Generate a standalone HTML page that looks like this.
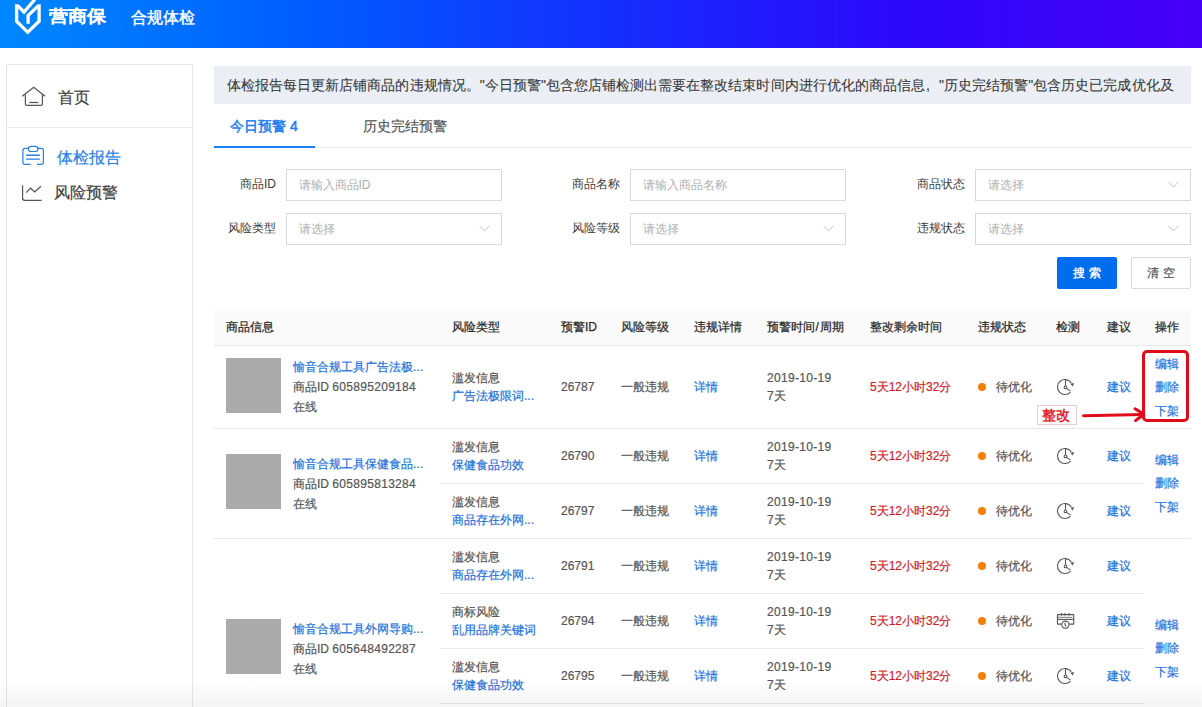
<!DOCTYPE html>
<html><head><meta charset="utf-8">
<style>
*{box-sizing:border-box;margin:0;padding:0}
html,body{width:1202px;height:707px;overflow:hidden;background:#fff;font-family:"Liberation Sans",sans-serif;color:#333}
.a{position:absolute;white-space:nowrap}
#hdr{position:absolute;left:0;top:0;width:1202px;height:48px;background:linear-gradient(90deg,#0088ff 0%,#005eff 25%,#1430ff 50%,#2d08fa 75%,#4700f7 100%)}
#side{position:absolute;left:6px;top:64px;width:187px;height:700px;border:1px solid #e6e6e6}
.menu{font-size:16px;line-height:20px;color:#3d3d3d}
.banner{position:absolute;left:214px;top:66px;width:977px;height:38px;background:#ebeff5;overflow:hidden}
.a.lbl{font-size:12px;line-height:16px;color:#3a3a3a;-webkit-text-stroke:0}
.inp{position:absolute;width:216px;height:32px;border:1px solid #d9d9d9;background:#fff}
.ph{position:absolute;left:11.5px;top:6.5px;font-size:12px;line-height:16px;color:#b0b0b0;white-space:nowrap}
.chev{position:absolute;right:11px;top:11px;line-height:0}
.th{font-size:12px;line-height:16px;color:#333;font-weight:bold}
.td{font-size:12px;line-height:18px;color:#555}
.lnk{color:#1c72dc}
.a{-webkit-text-stroke:0.2px currentColor}
.red{color:#e0141e}
.hl{position:absolute;height:1px;background:#e8e8e8}
.img{position:absolute;left:226px;width:55px;height:55px;background:#aaa}
.dot{position:absolute;width:8px;height:8px;border-radius:50%;background:#f57f0a}
</style></head><body>
<div id="hdr">
  <svg class="a" style="left:0;top:0" width="48" height="48" viewBox="0 0 48 48">
    <g fill="none" stroke="#fff" stroke-width="3.3" stroke-linejoin="miter">
      <path d="M16.6 4.2 V21.2 L27.7 32.3 L39.1 21.2 V4.2"/>
      <path d="M17.4 5.4 L24 12 L34.8 -0.5"/>
      <path d="M38.4 5.6 L28.1 15.5 V23.7"/>
    </g>
  </svg>
  <div class="a" style="left:49px;top:7px;font-size:19px;line-height:22px;font-weight:bold;color:#fff;transform:scale(0.99,0.88);transform-origin:0 0;-webkit-text-stroke:0.1px #fff">营商保</div>
  <div class="a" style="left:131px;top:8px;font-size:16px;line-height:20px;color:#fff;-webkit-text-stroke:0.4px #fff">合规体检</div>
</div>

<div id="side"></div>
<div class="hl" style="left:7px;top:127px;width:185px"></div>
<!-- home icon -->
<svg class="a" style="left:20px;top:84px" width="28" height="24" viewBox="20 84 28 24">
  <g fill="none" stroke="#555" stroke-width="1.2">
    <path d="M22.2 96.3 L33.7 87.3 L45.1 96.3"/>
    <path d="M25.4 94.4 V104 Q25.4 105.4 26.8 105.4 H41 Q42.4 105.4 42.4 104 V94.4"/>
    <path d="M29.2 102.5 H38.5"/>
  </g>
</svg>
<div class="a menu" style="left:58px;top:88px">首页</div>
<!-- report icon -->
<svg class="a" style="left:20px;top:144px" width="28" height="24" viewBox="20 144 28 24">
  <g fill="none" stroke="#2a7fe6" stroke-width="1.2">
    <path d="M28.4 148.3 H25 Q22.9 148.3 22.9 150.4 V162.3 Q22.9 164.4 25 164.4 H30.7"/>
    <path d="M37.9 148.3 H41.3 Q43.4 148.3 43.4 150.4 V162.3 Q43.4 164.4 41.3 164.4 H37"/>
    <rect x="28.4" y="146.4" width="9.5" height="5.1" rx="2.5"/>
    <path d="M26.2 155.3 H39.8 M26.2 159.1 H39.8" stroke-width="1.4"/>
  </g>
</svg>
<div class="a menu" style="left:57px;top:148px;color:#2a7fe6">体检报告</div>
<!-- chart icon -->
<svg class="a" style="left:20px;top:182px" width="28" height="22" viewBox="20 182 28 22">
  <g fill="none" stroke="#555" stroke-width="1.2">
    <path d="M22.6 185.2 V198.3 Q22.6 200.3 24.6 200.3 H41.7"/>
    <path d="M26.2 192.6 L30.5 188.2 L34.7 192 L40.9 186.3"/>
  </g>
</svg>
<div class="a menu" style="left:54px;top:183px">风险预警</div>

<div class="banner"><div class="a" style="left:13px;top:11px;font-size:14px;line-height:16px;color:#3a3a3a;-webkit-text-stroke:0.1px #3a3a3a;letter-spacing:0.04px">体检报告每日更新店铺商品的违规情况。"今日预警"包含您店铺检测出需要在整改结束时间内进行优化的商品信息<span style="display:inline-block;width:14px;text-indent:1px">,</span>"历史完结预警"包含历史已完成优化及</div></div>

<!-- tabs -->
<div class="a" style="left:230px;top:118px;font-size:14px;line-height:16px;color:#1a7ef0;-webkit-text-stroke:0.5px #1a7ef0">今日预警 4</div>
<div class="a" style="left:363px;top:118px;font-size:14px;line-height:16px;color:#555">历史完结预警</div>
<div class="hl" style="left:214px;top:147px;width:977px"></div>
<div class="a" style="left:214px;top:146px;width:101px;height:2px;background:#1a7ef0"></div>


<div class="a lbl" style="left:186px;top:176px;width:90px;text-align:right">商品ID</div>
<div class="inp" style="left:286px;top:169px"><div class="ph">请输入商品ID</div></div>
<div class="a lbl" style="left:186px;top:220px;width:90px;text-align:right">风险类型</div>
<div class="inp" style="left:286px;top:213px"><div class="ph">请选择</div><div class="chev"><svg width="11" height="7" viewBox="0 0 11 7"><path d="M0.5 0.8 L5.5 6 L10.5 0.8" fill="none" stroke="#c4c4c4" stroke-width="1"/></svg></div></div>
<div class="a lbl" style="left:530px;top:176px;width:90px;text-align:right">商品名称</div>
<div class="inp" style="left:630px;top:169px"><div class="ph">请输入商品名称</div></div>
<div class="a lbl" style="left:530px;top:220px;width:90px;text-align:right">风险等级</div>
<div class="inp" style="left:630px;top:213px"><div class="ph">请选择</div><div class="chev"><svg width="11" height="7" viewBox="0 0 11 7"><path d="M0.5 0.8 L5.5 6 L10.5 0.8" fill="none" stroke="#c4c4c4" stroke-width="1"/></svg></div></div>
<div class="a lbl" style="left:875px;top:176px;width:90px;text-align:right">商品状态</div>
<div class="inp" style="left:975px;top:169px"><div class="ph">请选择</div><div class="chev"><svg width="11" height="7" viewBox="0 0 11 7"><path d="M0.5 0.8 L5.5 6 L10.5 0.8" fill="none" stroke="#c4c4c4" stroke-width="1"/></svg></div></div>
<div class="a lbl" style="left:875px;top:220px;width:90px;text-align:right">违规状态</div>
<div class="inp" style="left:975px;top:213px"><div class="ph">请选择</div><div class="chev"><svg width="11" height="7" viewBox="0 0 11 7"><path d="M0.5 0.8 L5.5 6 L10.5 0.8" fill="none" stroke="#c4c4c4" stroke-width="1"/></svg></div></div>
<div class="a" style="left:1057px;top:257px;width:60px;height:32px;background:#006cee;border-radius:2px"></div>
<div class="a" style="left:1073px;top:265px;font-size:12px;line-height:16px;color:#fff;-webkit-text-stroke:0.35px #fff">搜</div>
<div class="a" style="left:1089px;top:265px;font-size:12px;line-height:16px;color:#fff;-webkit-text-stroke:0.35px #fff">索</div>
<div class="a" style="left:1131px;top:257px;width:60px;height:32px;border:1px solid #d9d9d9;border-radius:2px;background:#fff"></div>
<div class="a" style="left:1147px;top:265px;font-size:12px;line-height:16px;color:#555">清</div>
<div class="a" style="left:1163px;top:265px;font-size:12px;line-height:16px;color:#555">空</div>
<div class="a" style="left:214px;top:309px;width:977px;height:36px;background:#fafafa"></div>
<div class="hl" style="left:214px;top:345px;width:977px"></div>
<div class="a" style="left:226px;top:319px;font-size:12px;line-height:16px;color:#2a2a2a;-webkit-text-stroke:0.25px #2a2a2a">商品信息</div>
<div class="a" style="left:452px;top:319px;font-size:12px;line-height:16px;color:#2a2a2a;-webkit-text-stroke:0.25px #2a2a2a">风险类型</div>
<div class="a" style="left:561px;top:319px;font-size:12px;line-height:16px;color:#2a2a2a;-webkit-text-stroke:0.25px #2a2a2a">预警ID</div>
<div class="a" style="left:621px;top:319px;font-size:12px;line-height:16px;color:#2a2a2a;-webkit-text-stroke:0.25px #2a2a2a">风险等级</div>
<div class="a" style="left:694px;top:319px;font-size:12px;line-height:16px;color:#2a2a2a;-webkit-text-stroke:0.25px #2a2a2a">违规详情</div>
<div class="a" style="left:767px;top:319px;font-size:12px;line-height:16px;color:#2a2a2a;-webkit-text-stroke:0.25px #2a2a2a">预警时间<span style="margin:0 0.6px">/</span>周期</div>
<div class="a" style="left:870px;top:319px;font-size:12px;line-height:16px;color:#2a2a2a;-webkit-text-stroke:0.25px #2a2a2a">整改剩余时间</div>
<div class="a" style="left:978px;top:319px;font-size:12px;line-height:16px;color:#2a2a2a;-webkit-text-stroke:0.25px #2a2a2a">违规状态</div>
<div class="a" style="left:1056px;top:319px;font-size:12px;line-height:16px;color:#2a2a2a;-webkit-text-stroke:0.25px #2a2a2a">检测</div>
<div class="a" style="left:1107px;top:319px;font-size:12px;line-height:16px;color:#2a2a2a;-webkit-text-stroke:0.25px #2a2a2a">建议</div>
<div class="a" style="left:1155px;top:319px;font-size:12px;line-height:16px;color:#2a2a2a;-webkit-text-stroke:0.25px #2a2a2a">操作</div>
<div class="img" style="top:358px"></div>
<div class="a" style="left:293px;top:357px;font-size:12px;line-height:20px;color:#1c72dc">愉音合规工具广告法极...</div>
<div class="a" style="left:293px;top:377px;font-size:12px;line-height:20px;color:#555">商品ID <span style="letter-spacing:0.3px">605895209184</span></div>
<div class="a" style="left:293px;top:397px;font-size:12px;line-height:20px;color:#555">在线</div>
<div class="a" style="left:452px;top:369.0px;font-size:12px;line-height:18px;color:#555">滥发信息<br><span class="lnk">广告法极限词...</span></div>
<div class="a" style="left:561px;top:378.0px;font-size:12px;line-height:18px;color:#555">26787</div>
<div class="a" style="left:621px;top:378.0px;font-size:12px;line-height:18px;color:#555">一般违规</div>
<div class="a" style="left:694px;top:378.0px;font-size:12px;line-height:18px;color:#1c72dc">详情</div>
<div class="a" style="left:767px;top:369.0px;font-size:12px;line-height:18px;color:#555"><span style="letter-spacing:0.3px">2019-10-19</span><br>7天</div>
<div class="a" style="left:870px;top:378.0px;font-size:12px;line-height:18px;color:#d21e28">5天12小时32分</div>
<div class="dot" style="left:978px;top:383.0px"></div>
<div class="a" style="left:996px;top:378.0px;font-size:12px;line-height:18px;color:#555">待优化</div>
<div class="a" style="left:1052.9px;top:374.8px;line-height:0"><svg width="24" height="24" viewBox="-12 -12 24 24"><g fill="none" stroke="#555" stroke-width="1.1"><path d="M5.5 5.1 A7.5 7.5 0 1 1 6.3 -4.1"/><path d="M0.5 -7.1 V-1.2"/><circle cx="0.5" cy="0.4" r="1.35"/><path d="M1.6 1.4 L5.6 4.1"/></g><path d="M5.3 -3.3 L9.0 -3.9 L7.8 -0.6 Z" fill="#555"/></svg></div>
<div class="a" style="left:1107px;top:378.0px;font-size:12px;line-height:18px;color:#1c72dc">建议</div>
<div class="hl" style="left:214px;top:428px;width:977px"></div>
<div class="a" style="left:1155px;top:355.0px;font-size:12px;line-height:18px;color:#1c72dc">编辑</div>
<div class="a" style="left:1155px;top:378.3px;font-size:12px;line-height:18px;color:#1c72dc">删除</div>
<div class="a" style="left:1155px;top:401.6px;font-size:12px;line-height:18px;color:#1c72dc">下架</div>
<div class="img" style="top:454px"></div>
<div class="a" style="left:293px;top:454px;font-size:12px;line-height:20px;color:#1c72dc">愉音合规工具保健食品...</div>
<div class="a" style="left:293px;top:474px;font-size:12px;line-height:20px;color:#555">商品ID <span style="letter-spacing:0.3px">605895813284</span></div>
<div class="a" style="left:293px;top:494px;font-size:12px;line-height:20px;color:#555">在线</div>
<div class="a" style="left:452px;top:438.0px;font-size:12px;line-height:18px;color:#555">滥发信息<br><span class="lnk">保健食品功效</span></div>
<div class="a" style="left:561px;top:447.0px;font-size:12px;line-height:18px;color:#555">26790</div>
<div class="a" style="left:621px;top:447.0px;font-size:12px;line-height:18px;color:#555">一般违规</div>
<div class="a" style="left:694px;top:447.0px;font-size:12px;line-height:18px;color:#1c72dc">详情</div>
<div class="a" style="left:767px;top:438.0px;font-size:12px;line-height:18px;color:#555"><span style="letter-spacing:0.3px">2019-10-19</span><br>7天</div>
<div class="a" style="left:870px;top:447.0px;font-size:12px;line-height:18px;color:#d21e28">5天12小时32分</div>
<div class="dot" style="left:978px;top:452.0px"></div>
<div class="a" style="left:996px;top:447.0px;font-size:12px;line-height:18px;color:#555">待优化</div>
<div class="a" style="left:1052.9px;top:443.8px;line-height:0"><svg width="24" height="24" viewBox="-12 -12 24 24"><g fill="none" stroke="#555" stroke-width="1.1"><path d="M5.5 5.1 A7.5 7.5 0 1 1 6.3 -4.1"/><path d="M0.5 -7.1 V-1.2"/><circle cx="0.5" cy="0.4" r="1.35"/><path d="M1.6 1.4 L5.6 4.1"/></g><path d="M5.3 -3.3 L9.0 -3.9 L7.8 -0.6 Z" fill="#555"/></svg></div>
<div class="a" style="left:1107px;top:447.0px;font-size:12px;line-height:18px;color:#1c72dc">建议</div>
<div class="hl" style="left:440px;top:483.0px;width:704px"></div>
<div class="a" style="left:452px;top:493.0px;font-size:12px;line-height:18px;color:#555">滥发信息<br><span class="lnk">商品存在外网...</span></div>
<div class="a" style="left:561px;top:502.0px;font-size:12px;line-height:18px;color:#555">26797</div>
<div class="a" style="left:621px;top:502.0px;font-size:12px;line-height:18px;color:#555">一般违规</div>
<div class="a" style="left:694px;top:502.0px;font-size:12px;line-height:18px;color:#1c72dc">详情</div>
<div class="a" style="left:767px;top:493.0px;font-size:12px;line-height:18px;color:#555"><span style="letter-spacing:0.3px">2019-10-19</span><br>7天</div>
<div class="a" style="left:870px;top:502.0px;font-size:12px;line-height:18px;color:#d21e28">5天12小时32分</div>
<div class="dot" style="left:978px;top:507.0px"></div>
<div class="a" style="left:996px;top:502.0px;font-size:12px;line-height:18px;color:#555">待优化</div>
<div class="a" style="left:1052.9px;top:498.8px;line-height:0"><svg width="24" height="24" viewBox="-12 -12 24 24"><g fill="none" stroke="#555" stroke-width="1.1"><path d="M5.5 5.1 A7.5 7.5 0 1 1 6.3 -4.1"/><path d="M0.5 -7.1 V-1.2"/><circle cx="0.5" cy="0.4" r="1.35"/><path d="M1.6 1.4 L5.6 4.1"/></g><path d="M5.3 -3.3 L9.0 -3.9 L7.8 -0.6 Z" fill="#555"/></svg></div>
<div class="a" style="left:1107px;top:502.0px;font-size:12px;line-height:18px;color:#1c72dc">建议</div>
<div class="hl" style="left:214px;top:538px;width:977px"></div>
<div class="a" style="left:1155px;top:451.0px;font-size:12px;line-height:18px;color:#1c72dc">编辑</div>
<div class="a" style="left:1155px;top:474.3px;font-size:12px;line-height:18px;color:#1c72dc">删除</div>
<div class="a" style="left:1155px;top:497.6px;font-size:12px;line-height:18px;color:#1c72dc">下架</div>
<div class="img" style="top:619px"></div>
<div class="a" style="left:293px;top:618.5px;font-size:12px;line-height:20px;color:#1c72dc">愉音合规工具外网导购...</div>
<div class="a" style="left:293px;top:638.5px;font-size:12px;line-height:20px;color:#555">商品ID <span style="letter-spacing:0.3px">605648492287</span></div>
<div class="a" style="left:293px;top:658.5px;font-size:12px;line-height:20px;color:#555">在线</div>
<div class="a" style="left:452px;top:548.0px;font-size:12px;line-height:18px;color:#555">滥发信息<br><span class="lnk">商品存在外网...</span></div>
<div class="a" style="left:561px;top:557.0px;font-size:12px;line-height:18px;color:#555">26791</div>
<div class="a" style="left:621px;top:557.0px;font-size:12px;line-height:18px;color:#555">一般违规</div>
<div class="a" style="left:694px;top:557.0px;font-size:12px;line-height:18px;color:#1c72dc">详情</div>
<div class="a" style="left:767px;top:548.0px;font-size:12px;line-height:18px;color:#555"><span style="letter-spacing:0.3px">2019-10-19</span><br>7天</div>
<div class="a" style="left:870px;top:557.0px;font-size:12px;line-height:18px;color:#d21e28">5天12小时32分</div>
<div class="dot" style="left:978px;top:562.0px"></div>
<div class="a" style="left:996px;top:557.0px;font-size:12px;line-height:18px;color:#555">待优化</div>
<div class="a" style="left:1052.9px;top:553.8px;line-height:0"><svg width="24" height="24" viewBox="-12 -12 24 24"><g fill="none" stroke="#555" stroke-width="1.1"><path d="M5.5 5.1 A7.5 7.5 0 1 1 6.3 -4.1"/><path d="M0.5 -7.1 V-1.2"/><circle cx="0.5" cy="0.4" r="1.35"/><path d="M1.6 1.4 L5.6 4.1"/></g><path d="M5.3 -3.3 L9.0 -3.9 L7.8 -0.6 Z" fill="#555"/></svg></div>
<div class="a" style="left:1107px;top:557.0px;font-size:12px;line-height:18px;color:#1c72dc">建议</div>
<div class="hl" style="left:440px;top:593.0px;width:704px"></div>
<div class="a" style="left:452px;top:603.0px;font-size:12px;line-height:18px;color:#555">商标风险<br><span class="lnk">乱用品牌关键词</span></div>
<div class="a" style="left:561px;top:612.0px;font-size:12px;line-height:18px;color:#555">26794</div>
<div class="a" style="left:621px;top:612.0px;font-size:12px;line-height:18px;color:#555">一般违规</div>
<div class="a" style="left:694px;top:612.0px;font-size:12px;line-height:18px;color:#1c72dc">详情</div>
<div class="a" style="left:767px;top:603.0px;font-size:12px;line-height:18px;color:#555"><span style="letter-spacing:0.3px">2019-10-19</span><br>7天</div>
<div class="a" style="left:870px;top:612.0px;font-size:12px;line-height:18px;color:#d21e28">5天12小时32分</div>
<div class="dot" style="left:978px;top:617.0px"></div>
<div class="a" style="left:996px;top:612.0px;font-size:12px;line-height:18px;color:#555">待优化</div>
<div class="a" style="left:1053.4px;top:608.5px;line-height:0"><svg width="24" height="24" viewBox="-12 -12 24 24"><g fill="none" stroke="#555" stroke-width="1.1"><path d="M-3.4 3.15 H-7.05 Q-7.55 3.15 -7.55 2.65 V-5.85 Q-7.55 -6.35 -7.05 -6.35 H8.25 Q8.75 -6.35 8.75 -5.85 V2.65 Q8.75 3.15 8.25 3.15 H4.2"/><path d="M-7.55 -1.6 H8.75"/><path d="M-7 -3.7 H7.4" stroke-width="0.8"/><circle cx="0.4" cy="3.7" r="3.6"/><path d="M0 1.7 V3.9 L1.3 5.3"/></g><g fill="#555"><ellipse cx="-3.4" cy="-6.7" rx="0.75" ry="1.35"/><ellipse cx="0" cy="-6.7" rx="0.75" ry="1.35"/><ellipse cx="4" cy="-6.7" rx="0.75" ry="1.35"/></g></svg></div>
<div class="a" style="left:1107px;top:612.0px;font-size:12px;line-height:18px;color:#1c72dc">建议</div>
<div class="hl" style="left:440px;top:648.0px;width:704px"></div>
<div class="a" style="left:452px;top:658.0px;font-size:12px;line-height:18px;color:#555">滥发信息<br><span class="lnk">保健食品功效</span></div>
<div class="a" style="left:561px;top:667.0px;font-size:12px;line-height:18px;color:#555">26795</div>
<div class="a" style="left:621px;top:667.0px;font-size:12px;line-height:18px;color:#555">一般违规</div>
<div class="a" style="left:694px;top:667.0px;font-size:12px;line-height:18px;color:#1c72dc">详情</div>
<div class="a" style="left:767px;top:658.0px;font-size:12px;line-height:18px;color:#555"><span style="letter-spacing:0.3px">2019-10-19</span><br>7天</div>
<div class="a" style="left:870px;top:667.0px;font-size:12px;line-height:18px;color:#d21e28">5天12小时32分</div>
<div class="dot" style="left:978px;top:672.0px"></div>
<div class="a" style="left:996px;top:667.0px;font-size:12px;line-height:18px;color:#555">待优化</div>
<div class="a" style="left:1052.9px;top:663.8px;line-height:0"><svg width="24" height="24" viewBox="-12 -12 24 24"><g fill="none" stroke="#555" stroke-width="1.1"><path d="M5.5 5.1 A7.5 7.5 0 1 1 6.3 -4.1"/><path d="M0.5 -7.1 V-1.2"/><circle cx="0.5" cy="0.4" r="1.35"/><path d="M1.6 1.4 L5.6 4.1"/></g><path d="M5.3 -3.3 L9.0 -3.9 L7.8 -0.6 Z" fill="#555"/></svg></div>
<div class="a" style="left:1107px;top:667.0px;font-size:12px;line-height:18px;color:#1c72dc">建议</div>
<div class="hl" style="left:440px;top:703.0px;width:704px"></div>
<div class="a" style="left:452px;top:713.0px;font-size:12px;line-height:18px;color:#555">滥发信息<br><span class="lnk">保健食品功效</span></div>
<div class="a" style="left:561px;top:722.0px;font-size:12px;line-height:18px;color:#555">26796</div>
<div class="a" style="left:621px;top:722.0px;font-size:12px;line-height:18px;color:#555">一般违规</div>
<div class="a" style="left:694px;top:722.0px;font-size:12px;line-height:18px;color:#1c72dc">详情</div>
<div class="a" style="left:767px;top:713.0px;font-size:12px;line-height:18px;color:#555"><span style="letter-spacing:0.3px">2019-10-19</span><br>7天</div>
<div class="a" style="left:870px;top:722.0px;font-size:12px;line-height:18px;color:#d21e28">5天12小时32分</div>
<div class="dot" style="left:978px;top:727.0px"></div>
<div class="a" style="left:996px;top:722.0px;font-size:12px;line-height:18px;color:#555">待优化</div>
<div class="a" style="left:1052.9px;top:718.8px;line-height:0"><svg width="24" height="24" viewBox="-12 -12 24 24"><g fill="none" stroke="#555" stroke-width="1.1"><path d="M5.5 5.1 A7.5 7.5 0 1 1 6.3 -4.1"/><path d="M0.5 -7.1 V-1.2"/><circle cx="0.5" cy="0.4" r="1.35"/><path d="M1.6 1.4 L5.6 4.1"/></g><path d="M5.3 -3.3 L9.0 -3.9 L7.8 -0.6 Z" fill="#555"/></svg></div>
<div class="a" style="left:1107px;top:722.0px;font-size:12px;line-height:18px;color:#1c72dc">建议</div>
<div class="hl" style="left:214px;top:758px;width:977px"></div>
<div class="a" style="left:1155px;top:616.0px;font-size:12px;line-height:18px;color:#1c72dc">编辑</div>
<div class="a" style="left:1155px;top:639.3px;font-size:12px;line-height:18px;color:#1c72dc">删除</div>
<div class="a" style="left:1155px;top:662.6px;font-size:12px;line-height:18px;color:#1c72dc">下架</div>
<div class="a" style="left:1142px;top:350px;width:47px;height:72px;border:3.2px solid #e00c1a;border-radius:5px"></div>
<div class="a" style="left:1037px;top:405px;width:40px;height:20px;border:1px solid #f3caca;background:#fff"></div>
<div class="a" style="left:1042px;top:407px;font-size:14px;line-height:16px;color:#e3101c;-webkit-text-stroke:0.4px #e3101c">整改</div>
<svg class="a" style="left:1075px;top:400px" width="80" height="30" viewBox="1075 400 80 30"><g fill="none" stroke="#e00c1a" stroke-width="3" stroke-linecap="round" stroke-linejoin="round"><path d="M1083.5 415.7 L1143 414.4"/><path d="M1135 408.8 L1144 414.3 L1135.6 420.5"/></g></svg>
<div style="position:absolute;left:0;top:678px;width:1202px;height:29px;background:linear-gradient(rgba(0,0,0,0),rgba(0,0,0,0.045))"></div>
</body></html>
